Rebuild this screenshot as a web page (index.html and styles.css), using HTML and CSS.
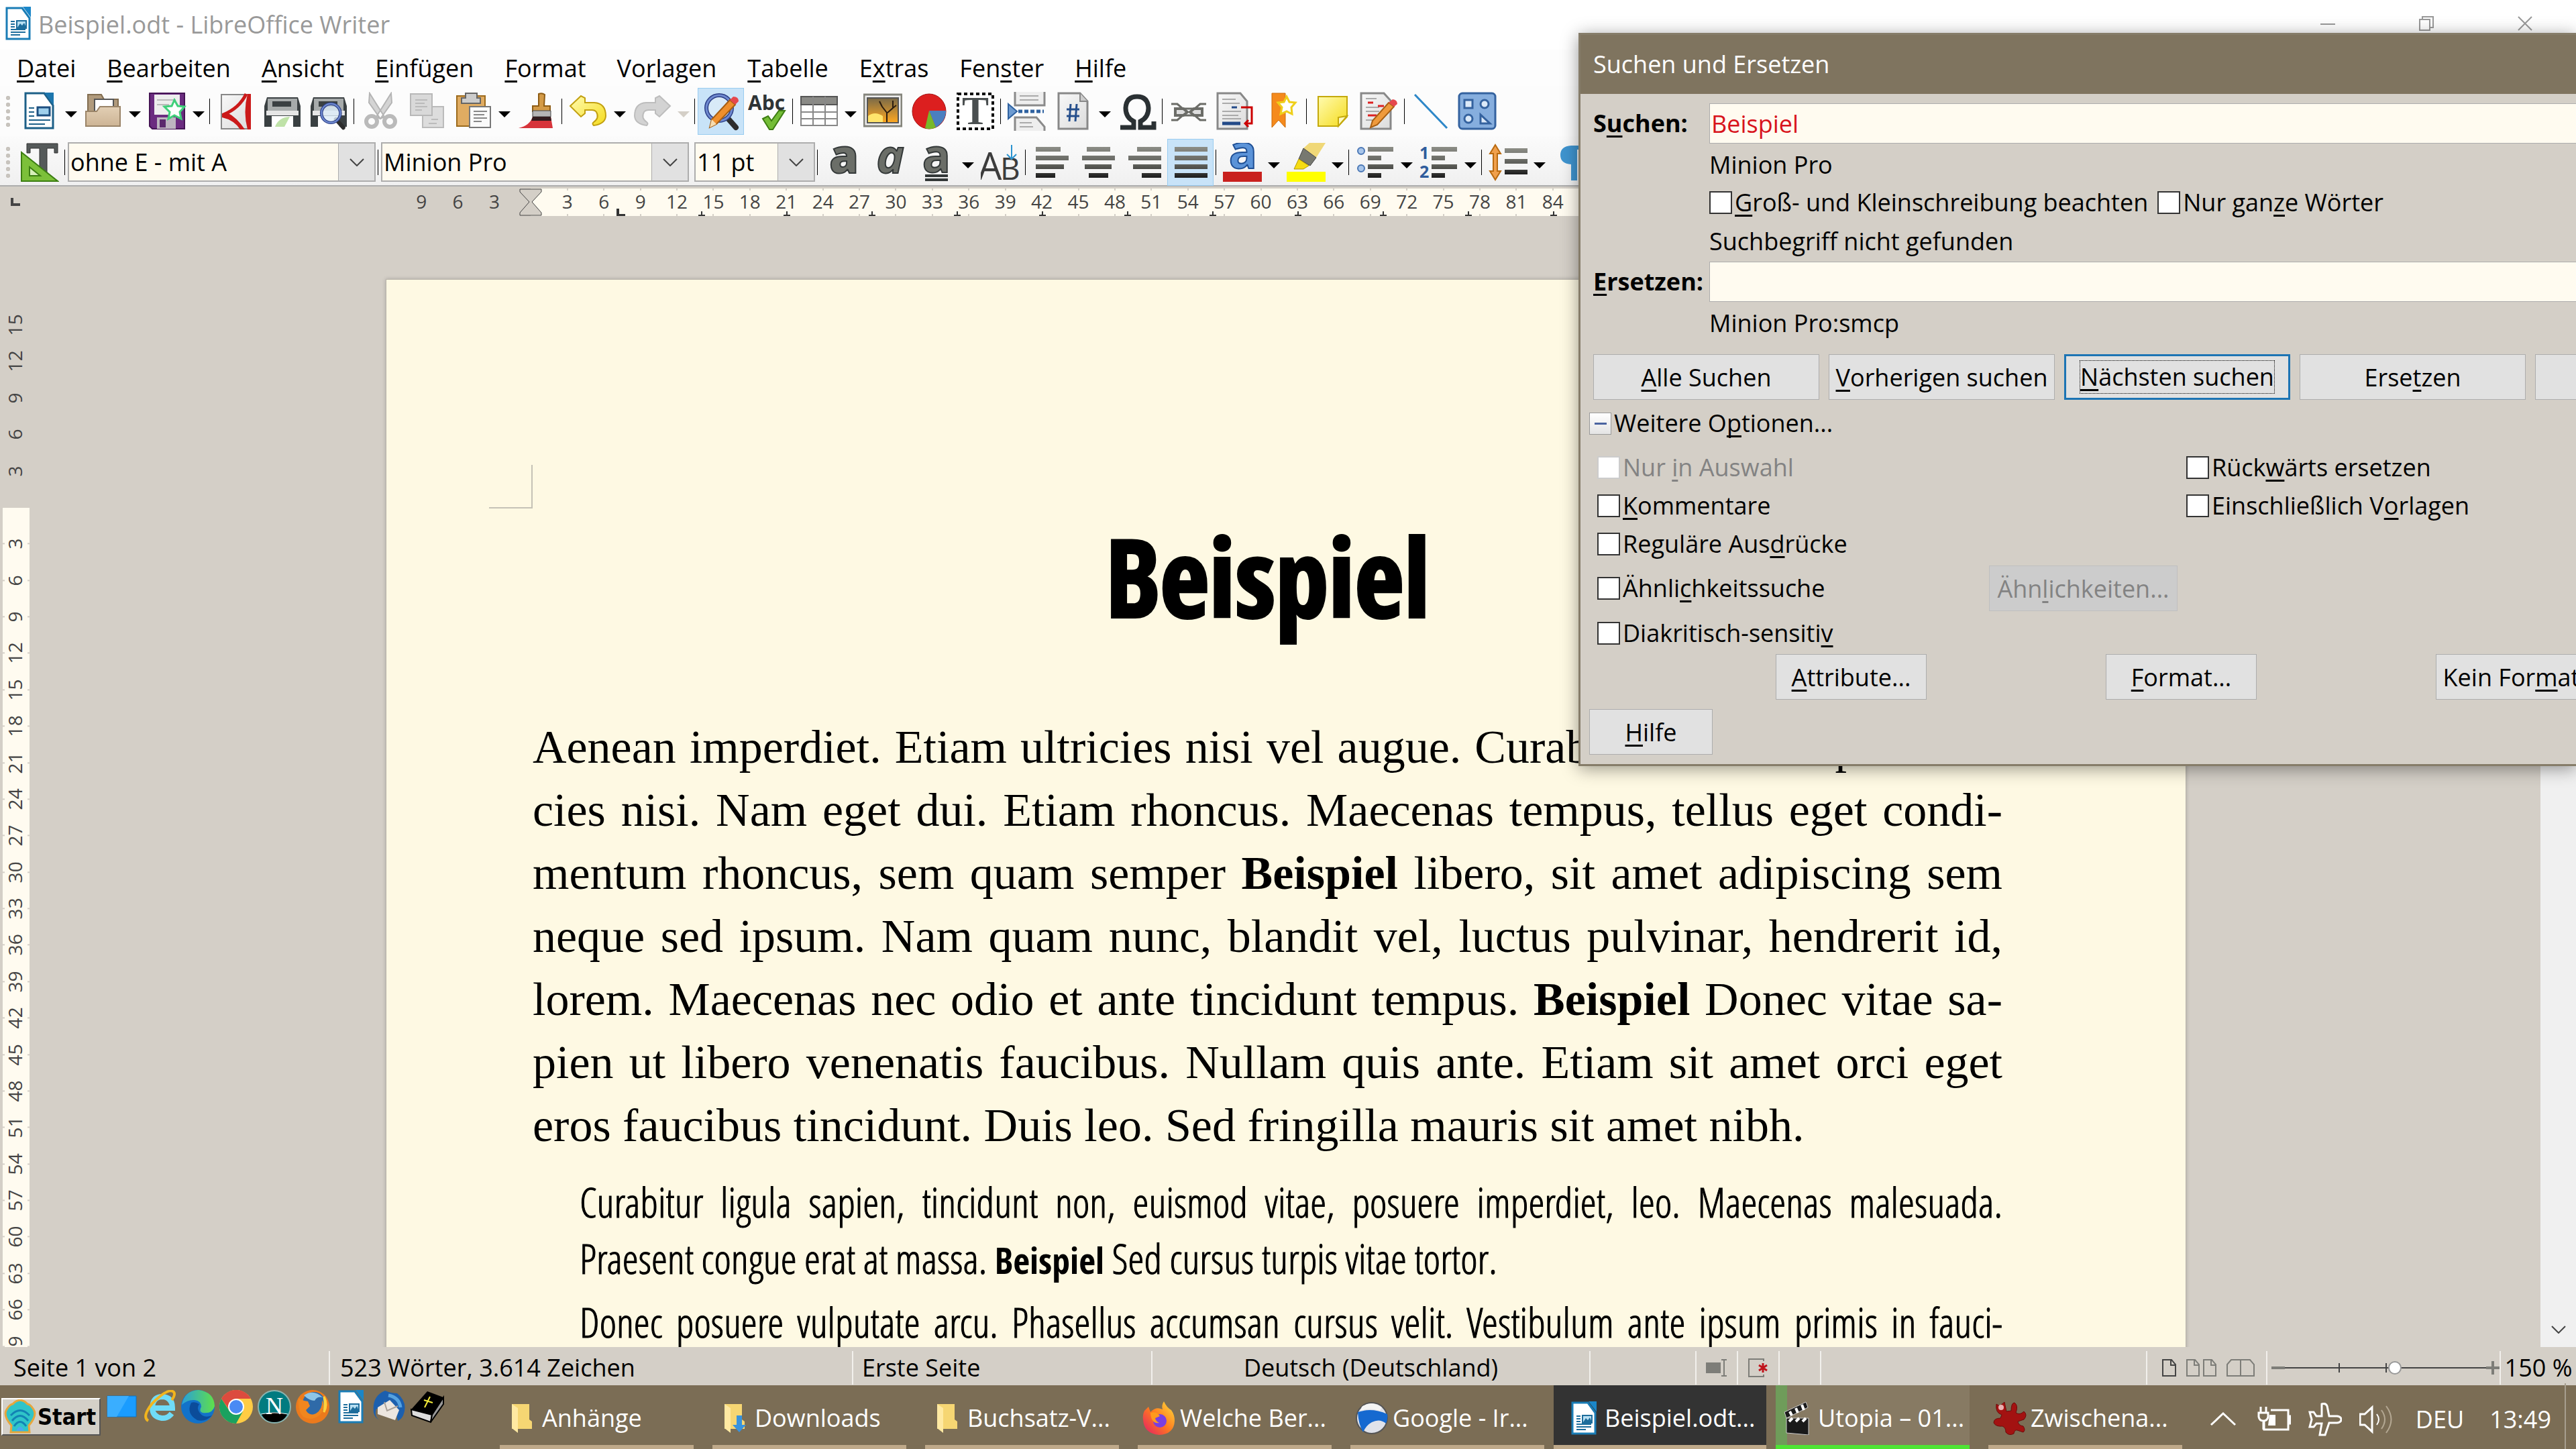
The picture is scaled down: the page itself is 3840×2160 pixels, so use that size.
FILE: index.html
```html
<!DOCTYPE html>
<html lang="de">
<head>
    <meta charset="UTF-8">
    <meta name="viewport" content="width=device-width, initial-scale=1.0">
    <title>Beispiel.odt - LibreOffice Writer</title>
    <link rel="stylesheet" href="styles.css">
</head>
<body>

<!-- Gemeinsame Symbole -->
<svg class="defs" aria-hidden="true">
    <defs>
        <linearGradient id="gPage" x1="0" y1="0" x2="1" y2="1"><stop offset="0" stop-color="#f8f8f8"/><stop offset="1" stop-color="#dcdcdc"/></linearGradient>
        <linearGradient id="gBar" x1="0" y1="0" x2="0" y2="1"><stop offset="0" stop-color="#8c8d86"/><stop offset="0.6" stop-color="#5c5d58"/><stop offset="1" stop-color="#1c1c1c"/></linearGradient>
        <linearGradient id="gFolder" x1="0" y1="0" x2="0" y2="1"><stop offset="0" stop-color="#e2cfb4"/><stop offset="1" stop-color="#cdb495"/></linearGradient>
        <linearGradient id="gSun" x1="0" y1="0" x2="0" y2="1"><stop offset="0" stop-color="#7a6a48"/><stop offset="1" stop-color="#ffa820"/></linearGradient>
        <linearGradient id="gYellow" x1="0" y1="0" x2="1" y2="1"><stop offset="0" stop-color="#fffbb0"/><stop offset="1" stop-color="#f5dc1e"/></linearGradient>
        <linearGradient id="gFire" x1="1" y1="0" x2="0" y2="1"><stop offset="0" stop-color="#ffe23c"/><stop offset="0.5" stop-color="#ff7a1f"/><stop offset="1" stop-color="#e3166c"/></linearGradient>
        <linearGradient id="gEdge" x1="0" y1="0" x2="1" y2="0"><stop offset="0" stop-color="#2a9fd8"/><stop offset="1" stop-color="#5fe04a"/></linearGradient>
    </defs>
    <symbol id="writer" viewBox="0 0 38 50">
        <path d="M2 2h23l11 15v31H2z" fill="#fff" stroke="#1a7db6" stroke-width="3"/>
        <path d="M26 0h12v16z" fill="#1a86c8"/>
        <path d="M8 22h6M8 26h6M8 30h6M8 34h22M8 38h22M8 42h14" stroke="#1d6d9c" stroke-width="2"/>
        <path d="M17 21h14v11H17z" fill="#b8dff2" stroke="#1d6d9c" stroke-width="2"/>
        <path d="M18 31l4-6 3 3 3-4 3 7z" fill="#1d6d9c"/>
    </symbol>
    <symbol id="folder" viewBox="0 0 36 44">
        <path d="M4 1h26v23l4 3v11H4z" fill="#f6d673"/>
        <path d="M4 1l9 6v37L4 37z" fill="#ffe9a2"/>
    </symbol>
    <symbol id="lens" viewBox="0 0 58 58">
        <path d="M36 36l15 17" stroke="#2d2d2d" stroke-width="8" stroke-linecap="round"/>
        <circle cx="26" cy="24" r="19" fill="#dcebf8" fill-opacity="0.8" stroke="#2c3f87" stroke-width="6"/>
        <circle cx="26" cy="24" r="19" fill="none" stroke="#6f8ad0" stroke-width="3"/>
    </symbol>
    <symbol id="chevron" viewBox="0 0 22 12"><path d="M1 1l10 10L21 1" fill="none" stroke="#444" stroke-width="2"/></symbol>
</svg>

<header class="titlebar">
    <svg class="title-icon"><use href="#writer"/></svg>
    <span class="title-text">Beispiel.odt - LibreOffice Writer</span>
    <div class="window-buttons">
        <button aria-label="Minimieren"><svg viewBox="0 0 22 22"><path d="M0 12h22" stroke="#999" stroke-width="2"/></svg></button>
        <button aria-label="Wiederherstellen"><svg viewBox="0 0 22 22"><path d="M1 5h15v16H1zM5 5V1h16v16h-5" fill="none" stroke="#999" stroke-width="2"/></svg></button>
        <button aria-label="Schließen"><svg viewBox="0 0 22 22"><path d="M1 1l20 20M21 1L1 21" stroke="#999" stroke-width="2"/></svg></button>
    </div>
</header>

<nav class="menubar">
    <button><u>D</u>atei</button>
    <button><u>B</u>earbeiten</button>
    <button><u>A</u>nsicht</button>
    <button><u>E</u>infügen</button>
    <button><u>F</u>ormat</button>
    <button>Vo<u>r</u>lagen</button>
    <button><u>T</u>abelle</button>
    <button>E<u>x</u>tras</button>
    <button>Fen<u>s</u>ter</button>
    <button><u>H</u>ilfe</button>
</nav>

<div class="toolbar">
    <span class="grip"></span>
    <button class="tool" aria-label="Neu"><svg viewBox="0 0 58 58"><path d="M8 2h28l13 18v34H8z" fill="#fff" stroke="#1d6088" stroke-width="3"/><path d="M36 1h14v19z" fill="#1d76ad"/><path d="M13 24h8M13 30h8M13 36h8M13 42h32M13 48h24" stroke="#1d6088" stroke-width="2"/><path d="M26 23h18v12H26z" fill="#9fd0ec" stroke="#1d4f80" stroke-width="3"/></svg></button>
    <button class="drop" aria-label="Neu Auswahl"></button>
    <button class="tool" aria-label="Öffnen"><svg viewBox="0 0 58 58"><path d="M6 4h20l4 7h21v18H6z" fill="#b09a7c" stroke="#826d50" stroke-width="2"/><path d="M16 11h28v20H16z" fill="#fff" stroke="#555" stroke-width="2"/><path d="M3 29h16l5-7h30v29H3z" fill="url(#gFolder)" stroke="#9a8468" stroke-width="2"/></svg></button>
    <button class="drop" aria-label="Öffnen Auswahl"></button>
    <button class="tool" aria-label="Speichern"><svg viewBox="0 0 58 58"><path d="M3 2h52v53H7l-4-4z" fill="#6b2c80" stroke="#451555" stroke-width="2"/><path d="M10 4h38v30H10z" fill="#eee"/><path d="M14 12h28M14 19h18" stroke="#bbb" stroke-width="2"/><path d="M14 38h28v17H14z" fill="#bdb5c0"/><path d="M18 41h9v12h-9z" fill="#5b2a6d"/><path d="M40 12l5 9 10 1-7 8 2 10-10-5-9 5 2-10-8-8 11-1z" fill="#fff" stroke="#3fd07a" stroke-width="3"/></svg></button>
    <button class="drop" aria-label="Speichern Auswahl"></button>
    <span class="sep"></span>
    <button class="tool" aria-label="Als PDF exportieren"><svg viewBox="0 0 58 58"><path d="M7 4h43v51H7z" fill="url(#gPage)" stroke="#888" stroke-width="2"/><path d="M44 3Q34 24 10 34" fill="none" stroke="#cb1a1a" stroke-width="5"/><path d="M8 32l8-1Q30 38 42 56h-7Q26 42 8 38z" fill="#cb1a1a"/><path d="M46 3h5v53h-5q-7-26 0-53z" fill="#cb1a1a"/></svg></button>
    <button class="tool" aria-label="Drucken"><svg viewBox="0 0 58 58"><path d="M6 8h46l4 13v31H2V21z" fill="#3a4042"/><path d="M7 10h44v18H7z" fill="#a7abab"/><path d="M14 14h28v8H14z" fill="#3a4042"/><path d="M5 28h48v7H5z" fill="#e6e6e6"/><path d="M13 36h32v16H13z" fill="#fff"/><path d="M18 52q5-14 22-15l-8 15z" fill="#bfe2a8"/></svg></button>
    <button class="tool" aria-label="Druckvorschau"><svg viewBox="0 0 58 58"><path d="M6 8h46l4 13v31H2V21z" fill="#3a4042"/><path d="M7 10h44v18H7z" fill="#a7abab"/><path d="M14 14h28v8H14z" fill="#3a4042"/><path d="M5 28h48v7H5z" fill="#e6e6e6"/><path d="M13 36h32v16H13z" fill="#fff"/><use href="#lens" x="13" y="13" width="43" height="45"/></svg></button>
    <span class="sep"></span>
    <button class="tool" aria-label="Ausschneiden"><svg viewBox="0 0 58 58"><path d="M13 2l22 35-6 3L12 16zM45 2L23 37l6 3 17-24z" fill="#d4d4d4" stroke="#b4b4b4" stroke-width="2"/><circle cx="16" cy="44" r="8" fill="none" stroke="#bababa" stroke-width="6"/><circle cx="43" cy="44" r="8" fill="none" stroke="#bababa" stroke-width="6"/></svg></button>
    <button class="tool" aria-label="Kopieren"><svg viewBox="0 0 58 58"><path d="M23 22h31v31H23z" fill="#ddd" stroke="#bbb" stroke-width="2"/><path d="M5 3h32v32H5z" fill="#d9d9d9" stroke="#b8b8b8" stroke-width="2"/><path d="M12 12h18M12 17h14M12 22h18M12 27h10M36 41h10M32 47h12" stroke="#bbb" stroke-width="2"/></svg></button>
    <button class="tool" aria-label="Einfügen"><svg viewBox="0 0 58 58"><path d="M5 6h42v45H5z" fill="#e0ac62" stroke="#9c6a1c" stroke-width="2"/><path d="M18 2h17v7h5v8H12V9h6z" fill="#ccc" stroke="#666" stroke-width="2"/><path d="M24 22h31v31H24z" fill="#fafafa" stroke="#777" stroke-width="2"/><path d="M30 29h20M30 34h16M30 39h20M30 44h12" stroke="#888" stroke-width="2"/></svg></button>
    <button class="drop" aria-label="Einfügen Auswahl"></button>
    <button class="tool" aria-label="Format übertragen"><svg viewBox="0 0 58 58"><path d="M32 3q5-2 9 1l-1 17h9v8H23v-8h9z" fill="#d39a47" stroke="#8e5c14" stroke-width="2"/><path d="M23 28h27v9H23z" fill="#b5b5b5" stroke="#444" stroke-width="1"/><path d="M23 37h27l3 17H2q17-4 21-17z" fill="#d7343b"/><path d="M23 37h27l1 6H21z" fill="#331c1e"/></svg></button>
    <span class="sep"></span>
    <button class="tool" aria-label="Rückgängig"><svg viewBox="0 0 58 58"><path d="M2 21L18 6l6 3v7h14q17 1 17 20-1 12-18 14-3-3 0-5 9-6 4-15-2-3-7-3H24v5l-6 5z" fill="url(#gYellow)" stroke="#c2a010" stroke-width="2"/></svg></button>
    <button class="drop" aria-label="Rückgängig Auswahl"></button>
    <button class="tool" aria-label="Wiederherstellen"><svg viewBox="0 0 58 58"><path d="M56 21L40 6l-6 3v7H20Q3 17 3 36q1 12 18 14 3-3 0-5-9-6-4-15 2-3 7-3h10v5l6 5z" fill="#d3d3d3" stroke="#bdbdbd" stroke-width="2"/></svg></button>
    <button class="drop off" disabled aria-label="Wiederherstellen Auswahl"></button>
    <span class="sep"></span>
    <button class="tool active" aria-label="Suchen und Ersetzen"><svg viewBox="0 0 58 58"><use href="#lens" width="58" height="58"/><path d="M12 53l3-12L42 12l8 7-28 29z" fill="#ef8f2c" stroke="#a75e12" stroke-width="2"/><path d="M42 12l5-5q8 0 8 7l-5 5z" fill="#e5484d"/><path d="M12 53l3-12 7 7z" fill="#f6dcb0"/></svg></button>
    <button class="tool" aria-label="Rechtschreibung"><svg viewBox="0 0 58 58"><text x="0" y="27" class="glyph-abc">Abc</text><path d="M22 40l8-4 5 7 11-15h9L37 56h-5z" fill="#74bd37" stroke="#3d7d12" stroke-width="2"/></svg></button>
    <span class="sep"></span>
    <button class="tool" aria-label="Tabelle"><svg viewBox="0 0 58 58"><path d="M2 7h54v43H2z" fill="#fff" stroke="#888" stroke-width="2"/><path d="M2 7h54v12H2z" fill="#8a8a86" stroke="#555" stroke-width="2"/><path d="M20 7v43M38 7v43M2 30h54M2 40h54" stroke="#888" stroke-width="2"/></svg></button>
    <button class="drop" aria-label="Tabelle Auswahl"></button>
    <button class="tool" aria-label="Bild"><svg viewBox="0 0 58 58"><path d="M1 4h56v47H1z" fill="#eee" stroke="#85857c" stroke-width="3"/><path d="M6 9h46v37H6z" fill="url(#gSun)" stroke="#555" stroke-width="2"/><path d="M7 45V36q10-8 22 0v9z" fill="#ffe46c"/><path d="M35 45V31l-7-9M36 31l8-7V13M44 24l5-4M28 22l-4-8" stroke="#2b1d10" stroke-width="2" fill="none"/></svg></button>
    <button class="tool" aria-label="Diagramm"><svg viewBox="0 0 58 58"><ellipse cx="29" cy="29" rx="25" ry="26" fill="#dc1f1f" stroke="#a51010" stroke-width="1"/><path d="M29 28h25q0 16-15 25z" fill="#4a7fc0"/><path d="M29 28l10 25q-8 4-16 1z" fill="#78b82a"/></svg></button>
    <button class="tool" aria-label="Textfeld"><svg viewBox="0 0 58 58"><path d="M3 3h52v52H3z" fill="#fff" stroke="#000" stroke-width="4" stroke-dasharray="5 4"/><text x="29" y="48" text-anchor="middle" class="glyph-t">T</text></svg></button>
    <span class="sep"></span>
    <button class="tool" aria-label="Seitenumbruch"><svg viewBox="0 0 58 58"><path d="M11 0v20h44V0M11 58V38h32l12 14v6" fill="#eee" stroke="#8a8a8a" stroke-width="3"/><path d="M18 6h28M18 12h28M18 46h18M18 52h20" stroke="#aaa" stroke-width="2"/><path d="M1 18l13 11L1 40z" fill="#6d9bd1" stroke="#2f62a0" stroke-width="2"/><path d="M16 29h38" stroke="#2f62a0" stroke-width="5" stroke-dasharray="6 3"/></svg></button>
    <button class="tool" aria-label="Feldbefehl"><svg viewBox="0 0 58 58"><path d="M7 2h32l11 12v41H7z" fill="url(#gPage)" stroke="#888" stroke-width="3"/><path d="M39 2v12h11" fill="#ccc" stroke="#888" stroke-width="2"/><path d="M25 18l-2 26M34 18l-2 26M19 26h19M19 36h19" stroke="#264f8c" stroke-width="3"/></svg></button>
    <button class="drop" aria-label="Feldbefehl Auswahl"></button>
    <button class="tool" aria-label="Sonderzeichen"><svg viewBox="0 0 58 58"><path d="M4 53h20v-9Q12 38 12 24 13 7 29 7t17 17q0 14-12 20v9h20v-9" fill="none" stroke="#2a3033" stroke-width="7"/></svg></button>
    <span class="sep"></span>
    <button class="tool" aria-label="Hyperlink"><svg viewBox="0 0 58 58"><path d="M3 18h9l8 7h18l8-7h9M3 42h9l8-7h18l8 7h9" fill="none" stroke="#6b6c67" stroke-width="3"/><path d="M9 25h12l6 5-6 5H9zM49 25H37l-6 5 6 5h12z" fill="#ddd" stroke="#6b6c67" stroke-width="4"/></svg></button>
    <button class="tool" aria-label="Fußnote"><svg viewBox="0 0 58 58"><path d="M3 2h34l10 12v41H3z" fill="url(#gPage)" stroke="#888" stroke-width="3"/><path d="M10 11h20M10 17h26M10 29h28M10 35h24M10 40h28" stroke="#aaa" stroke-width="2"/><path d="M10 47h27" stroke="#234a88" stroke-width="5"/><path d="M24 23h8" stroke="#234a88" stroke-width="3"/><path d="M38 23h16v24H44m5-5l-5 5 5 5" fill="none" stroke="#c00" stroke-width="3"/></svg></button>
    <button class="tool" aria-label="Lesezeichen"><svg viewBox="0 0 58 58"><path d="M15 2h20v51l-10-11-10 11z" fill="#f58a1c" stroke="#cc6a08" stroke-width="1"/><path d="M37 7l4 8 9 1-6 7 1 10-8-4-9 4 2-10-6-7 9-1z" fill="#fff" stroke="#efcf1a" stroke-width="3"/></svg></button>
    <span class="sep"></span>
    <button class="tool" aria-label="Kommentar"><svg viewBox="0 0 58 58"><path d="M7 7h43v30L37 51H7z" fill="url(#gYellow)" stroke="#c4a90c" stroke-width="2"/><path d="M50 36L37 51V38z" fill="#fffac0" stroke="#c4a90c" stroke-width="2"/></svg></button>
    <button class="tool" aria-label="Änderungen"><svg viewBox="0 0 58 58"><path d="M2 2h34l10 11v42H2z" fill="url(#gPage)" stroke="#888" stroke-width="3"/><path d="M9 10h16M9 23h20M9 29h20M9 42h16" stroke="#aaa" stroke-width="2"/><path d="M12 16h8M27 21h9M12 35h13" stroke="#d22" stroke-width="3"/><path d="M16 53l3-10 24-27 8 6-25 27z" fill="#ef9a3c" stroke="#a75e12" stroke-width="2"/><path d="M43 16l6-5q7 1 7 7l-5 4z" fill="#e5484d"/></svg></button>
    <span class="sep"></span>
    <button class="tool" aria-label="Linie"><svg viewBox="0 0 58 58"><path d="M5 4l48 50" stroke="#2d87c8" stroke-width="3"/></svg></button>
    <button class="tool" aria-label="Formen"><svg viewBox="0 0 58 58"><rect x="2" y="2" width="54" height="53" rx="5" fill="#86aede" stroke="#34629f" stroke-width="3"/><path d="M10 12h12v12H10zM34 34v13h14z" fill="#dbe9f8" stroke="#34629f" stroke-width="3"/><circle cx="40" cy="18" r="6" fill="#dbe9f8" stroke="#34629f" stroke-width="3"/><circle cx="16" cy="40" r="6" fill="#dbe9f8" stroke="#34629f" stroke-width="3"/></svg></button>
</div>

<div class="toolbar format">
    <span class="grip"></span>
    <button class="tool" aria-label="Formatvorlagen"><svg viewBox="0 0 58 58"><path d="M10 1h46v14h-5V8H40v42H29V8H15v7h-5z" fill="#555a5a" stroke="#333" stroke-width="1"/><path d="M2 14l54 43H2z" fill="#7cc03a" stroke="#3c7e12" stroke-width="2"/><path d="M14 36l16 13H14z" fill="#d6efb8" stroke="#3c7e12" stroke-width="2"/></svg></button>
    <span class="sep"></span>
    <div class="combo style-combo"><select aria-label="Absatzvorlage"><option>ohne E - mit A</option></select><span><svg><use href="#chevron"/></svg></span></div>
    <span class="sep"></span>
    <div class="combo font-combo"><select aria-label="Schriftart"><option>Minion Pro</option></select><span><svg><use href="#chevron"/></svg></span></div>
    <span class="sep blank"></span>
    <div class="combo size-combo"><select aria-label="Schriftgröße"><option>11 pt</option></select><span><svg><use href="#chevron"/></svg></span></div>
    <span class="sep"></span>
    <button class="tool" aria-label="Fett"><svg viewBox="0 0 58 58"><text x="29" y="45" text-anchor="middle" class="glyph-a bold">a</text></svg></button>
    <button class="tool" aria-label="Kursiv"><svg viewBox="0 0 58 58"><text x="29" y="45" text-anchor="middle" class="glyph-a italic">a</text></svg></button>
    <button class="tool" aria-label="Unterstrichen"><svg viewBox="0 0 58 58"><text x="29" y="44" text-anchor="middle" class="glyph-a">a</text><path d="M12 49h34M12 55h34" stroke="#333838" stroke-width="4"/></svg></button>
    <button class="drop" aria-label="Unterstrichen Auswahl"></button>
    <button class="tool" aria-label="Kapitälchen"><svg viewBox="0 0 58 58"><text x="-4" y="55" class="glyph-ab">A</text><text x="29" y="55" class="glyph-ab small">B</text><path d="M46 3v20M39 17l7 7 7-7" fill="none" stroke="#2a93d0" stroke-width="2"/></svg></button>
    <span class="sep"></span>
    <button class="tool" aria-label="Linksbündig"><svg viewBox="0 0 58 58"><path d="M5 6h37v7H5zM5 19h49v7H5zM5 32h42v7H5zM5 45h29v7H5z" fill="url(#gBar)"/></svg></button>
    <button class="tool" aria-label="Zentriert"><svg viewBox="0 0 58 58"><path d="M12 6h35v7H12zM5 19h49v7H5zM9 32h40v7H9zM15 45h29v7H15z" fill="url(#gBar)"/></svg></button>
    <button class="tool" aria-label="Rechtsbündig"><svg viewBox="0 0 58 58"><path d="M18 6h36v7H18zM5 19h49v7H5zM12 32h42v7H12zM25 45h29v7H25z" fill="url(#gBar)"/></svg></button>
    <button class="tool active" aria-label="Blocksatz"><svg viewBox="0 0 58 58"><path d="M5 6h49v7H5zM5 19h49v7H5zM5 32h49v7H5zM5 45h49v7H5z" fill="url(#gBar)"/></svg></button>
    <span class="sep"></span>
    <button class="tool" aria-label="Schriftfarbe"><svg viewBox="0 0 58 58"><text x="30" y="38" text-anchor="middle" class="glyph-a blue">a</text><path d="M0 43h58v15H0z" fill="#c9211e"/></svg></button>
    <button class="drop" aria-label="Schriftfarbe Auswahl"></button>
    <button class="tool" aria-label="Hervorhebung"><svg viewBox="0 0 58 58"><path d="M34 0h24L44 22 25 8z" fill="#f0d878"/><path d="M25 8l19 14-9 12-17-10z" fill="#777870" stroke="#444" stroke-width="1"/><path d="M18 24l15 10-8 5H11z" fill="#f6dc14" stroke="#b39a00" stroke-width="1"/><path d="M0 43h58v15H0z" fill="#ff0"/></svg></button>
    <button class="drop" aria-label="Hervorhebung Auswahl"></button>
    <span class="sep"></span>
    <button class="tool" aria-label="Aufzählung"><svg viewBox="0 0 58 58"><circle cx="8" cy="12" r="5" fill="#a9c6ea" stroke="#4a77b5" stroke-width="2"/><circle cx="8" cy="38" r="5" fill="#a9c6ea" stroke="#4a77b5" stroke-width="2"/><path d="M18 6h38v7H18zM18 19h20v7H18zM18 32h38v7H18zM18 45h20v7H18z" fill="url(#gBar)"/></svg></button>
    <button class="drop" aria-label="Aufzählung Auswahl"></button>
    <button class="tool" aria-label="Nummerierung"><svg viewBox="0 0 58 58"><text x="0" y="24" class="glyph-num">1</text><text x="0" y="52" class="glyph-num">2</text><path d="M18 6h38v7H18zM18 19h20v7H18zM18 32h38v7H18zM18 45h20v7H18z" fill="url(#gBar)"/></svg></button>
    <button class="drop" aria-label="Nummerierung Auswahl"></button>
    <span class="sep"></span>
    <button class="tool" aria-label="Zeilenabstand"><svg viewBox="0 0 58 58"><path d="M10 3l8 13h-5v26h5l-8 13-8-13h5V16H2z" fill="#f0a04c" stroke="#b96a10" stroke-width="2"/><path d="M24 8h34v7H24zM24 24h34v7H24zM24 40h34v7H24z" fill="url(#gBar)"/></svg></button>
    <button class="drop" aria-label="Zeilenabstand Auswahl"></button>
    <span class="sep blank"></span>
    <button class="tool" aria-label="Formatierungszeichen"><svg viewBox="0 0 58 58"><path d="M50 4H20Q4 5 4 18t16 14v24h9V10h7v46h9V10h5z" fill="#3f94cf"/></svg></button>
</div>

<div class="ruler">
    <svg class="tab-kind" viewBox="0 0 14 12"><path d="M2 0v10h12" fill="none" stroke="#444" stroke-width="4"/></svg>
    <div class="ruler-body">
        <div class="ruler-numbers">
            <span>9</span><span>6</span><span>3</span><span></span>
            <span>3</span><span>6</span><span>9</span><span>12</span><span>15</span><span>18</span><span>21</span><span>24</span><span>27</span><span>30</span><span>33</span><span>36</span><span>39</span><span>42</span><span>45</span><span>48</span><span>51</span><span>54</span><span>57</span><span>60</span><span>63</span><span>66</span><span>69</span><span>72</span><span>75</span><span>78</span><span>81</span><span>84</span>
        </div>
        <svg class="ruler-marks" viewBox="0 0 1800 41">
            <path d="M174 1h32v4l-14 15 14 16v4h-32v-4l14-16-14-15z" fill="#d4cfc7" stroke="#444" stroke-width="1"/>
            <path d="M320 30v10h11" fill="none" stroke="#333" stroke-width="4"/>
            <path d="M445 34v6m-5 0h10M572 34v6m-5 0h10M699 34v6m-5 0h10M826 34v6m-5 0h10M953 34v6m-5 0h10M1080 34v6m-5 0h10M1207 34v6m-5 0h10M1334 34v6m-5 0h10M1461 34v6m-5 0h10M1588 34v6m-5 0h10M1715 34v6m-5 0h10" stroke="#333" stroke-width="2"/>
        </svg>
    </div>
</div>

<main class="workspace">
    <div class="vruler">
        <div class="vruler-numbers">
            <span>15</span><span>12</span><span>9</span><span>6</span><span>3</span><span></span>
            <span>3</span><span>6</span><span>9</span><span>12</span><span>15</span><span>18</span><span>21</span><span>24</span><span>27</span><span>30</span><span>33</span><span>36</span><span>39</span><span>42</span><span>45</span><span>48</span><span>51</span><span>54</span><span>57</span><span>60</span><span>63</span><span>66</span><span>69</span>
        </div>
    </div>
    <article class="page">
        <div class="crop-mark"></div>
        <h1>Beispiel</h1>
        <p class="lead">
            <span>Aenean imperdiet. Etiam ultricies nisi vel augue. Curabitur ullamcorper ultri-</span>
            <span>cies nisi. Nam eget dui. Etiam rhoncus. Maecenas tempus, tellus eget condi-</span>
            <span>mentum rhoncus, sem quam semper <b>Beispiel</b> libero, sit amet adipiscing sem</span>
            <span>neque sed ipsum. Nam quam nunc, blandit vel, luctus pulvinar, hendrerit id,</span>
            <span>lorem. Maecenas nec odio et ante tincidunt tempus. <b>Beispiel</b> Donec vitae sa-</span>
            <span>pien ut libero venenatis faucibus. Nullam quis ante. Etiam sit amet orci eget</span>
            <span class="last">eros faucibus tincidunt. Duis leo. Sed fringilla mauris sit amet nibh.</span>
        </p>
        <p class="note">
            <span>Curabitur ligula sapien, tincidunt non, euismod vitae, posuere imperdiet, leo. Maecenas malesuada.</span>
            <span class="last">Praesent congue erat at massa. <b>Beispiel</b> Sed cursus turpis vitae tortor.</span>
        </p>
        <p class="note">
            <span>Donec posuere vulputate arcu. Phasellus accumsan cursus velit. Vestibulum ante ipsum primis in fauci-</span>
        </p>
    </article>
    <div class="scrollbar"><svg><use href="#chevron"/></svg></div>
</main>

<footer class="statusbar">
    <span class="st-page">Seite 1 von 2</span>
    <span class="st-words">523 Wörter, 3.614 Zeichen</span>
    <span class="st-style">Erste Seite</span>
    <span class="st-lang">Deutsch (Deutschland)</span>
    <span class="st-empty"></span>
    <span class="st-cell"><svg viewBox="0 0 34 28"><path d="M1 6h22v16H1z" fill="#7d7d78"/><path d="M24 2h8M28 2v24M24 26h8" stroke="#7d7d78" stroke-width="2"/></svg></span>
    <span class="st-cell"><svg viewBox="0 0 34 28"><path d="M25 4V1H3v26h22v-3" fill="none" stroke="#7d7d78" stroke-width="2"/><path d="M24 7v14M18 10l12 8M30 10l-12 8" stroke="#c0141c" stroke-width="3"/></svg></span>
    <span class="st-cell"></span>
    <span class="st-gap"></span>
    <span class="st-views"><svg viewBox="0 0 140 26"><path d="M1 1h13l6 7v17H1zM13 1v8h7" fill="none" stroke="#444" stroke-width="2"/><path d="M37 1h12l6 7v17H37zM48 1v8h7M62 1h12l6 7v17H62zM73 1v8h7M97 8l6-7h14v24H97zM117 1h14l6 7v17h-20z" fill="none" stroke="#7d7d78" stroke-width="2"/></svg></span>
    <span class="st-zoom"><button aria-label="Verkleinern"><svg viewBox="0 0 20 20"><path d="M0 10h20" stroke="#7d7d78" stroke-width="4"/></svg></button><input type="range" min="0" max="100" value="55" aria-label="Maßstab"><button aria-label="Vergrößern"><svg viewBox="0 0 20 20"><path d="M0 10h20M10 0v20" stroke="#7d7d78" stroke-width="4"/></svg></button></span>
    <span class="st-percent">150 %</span>
</footer>

<footer class="taskbar">
    <button class="start"><svg viewBox="0 0 48 52"><path d="M10 49l1-10Q-2 24 4 15q5-8 9-8 4-5 11-6 7 1 11 6 4 0 9 8 6 9-7 24l1 10z" fill="#2fc4c8" stroke="#e6a63c" stroke-width="3"/><path d="M12 32q12-15 24 0M15 40q9-13 18 0M10 24q14-15 28 0" fill="none" stroke="#1282b4" stroke-width="3"/><path d="M18 47q6-13 12 0z" fill="#49a8f0"/></svg>Start</button>
    <div class="quick">
        <button aria-label="Desktop"><svg viewBox="0 0 50 50"><path d="M4 9h43v31H4z" fill="#1a9cff" stroke="#1173bd" stroke-width="1"/><path d="M4 9h32L18 40H4z" fill="#3aaeff"/></svg></button>
        <button aria-label="Internet Explorer"><svg viewBox="0 0 50 50"><path d="M43 35Q37 43 28 42 14 40 14 26 15 10 29 10q15 1 15 17H16" fill="none" stroke="#6fdcf8" stroke-width="8"/><path d="M8 46Q-2 40 14 20 38-4 46 3q3 4-3 12" fill="none" stroke="#f2b51e" stroke-width="4"/></svg></button>
        <button aria-label="Edge"><svg viewBox="0 0 50 50"><circle cx="25" cy="25" r="25" fill="#1272c9"/><path d="M1 22Q5 1 26 0q23 3 24 24-3 12-18 10-6-2-2-9 0-9-10-10T1 22z" fill="url(#gEdge)"/><path d="M15 19q-8 16 9 26 13 3 22-7-13 5-19-5-4-6 0-12-6-4-12-2z" fill="#0b4c9a"/></svg></button>
        <button aria-label="Chrome"><svg viewBox="0 0 50 50"><circle cx="25" cy="25" r="25" fill="#fc4"/><path d="M3 13a25 25 0 0 1 44 0H25L15 30z" fill="#dc4b3e"/><path d="M3 13a25 25 0 0 0 22 37l10-18-20-1z" fill="#1aa15f"/><circle cx="25" cy="25" r="11" fill="#4a8af4" stroke="#fff" stroke-width="2"/></svg></button>
        <button aria-label="Netscape"><svg viewBox="0 0 50 50"><circle cx="25" cy="25" r="24" fill="#007b80" stroke="#8ab4b0" stroke-width="2"/><path d="M6 36q19-5 38 0-5 12-19 12T6 36z" fill="#000"/><path d="M5 36q20-4 40 0" stroke="#fff" stroke-width="1" fill="none"/><text x="25" y="36" text-anchor="middle" class="glyph-n">N</text></svg></button>
        <button aria-label="Firefox"><svg viewBox="0 0 50 50"><circle cx="25" cy="25" r="25" fill="#ec7a1c"/><circle cx="27" cy="20" r="17" fill="#2f6aa8"/><path d="M12 8q14-10 28 3-8-2-12 5-8 0-16-8z" fill="#8ec5e6"/><path d="M4 12q5 4 14 5l3 7-6 6q5 10 15 5 10-6 9-20 6 12-3 22-12 10-25 3Q2 30 4 12z" fill="#f0861e"/><path d="M42 10q6 12 0 23 2-12 0-23z" fill="#ffd23c" stroke="#ffd23c" stroke-width="3"/></svg></button>
        <button aria-label="LibreOffice Writer"><svg viewBox="0 0 38 50"><use href="#writer"/></svg></button>
        <button aria-label="Thunderbird"><svg viewBox="0 0 50 50"><path d="M2 34Q-1 9 19 1q9 4 18 4 17 14 9 33-3 6-8 8l-4-16L6 28q-4 12 5 17-7-3-9-11z" fill="#1c5fae"/><path d="M8 26l18-11 14 15-6 15L8 36z" fill="#ece6e0"/><path d="M18 18l4 13 16-7" fill="none" stroke="#a9a098" stroke-width="2"/><path d="M24 8q16 3 18 18" stroke="#56a2e0" stroke-width="5" fill="none"/></svg></button>
        <button aria-label="Bibel"><svg viewBox="0 0 50 50"><path d="M25 2l24 9-17 26-31-8z" fill="#000"/><path d="M1 29l31 8-2 11L2 38z" fill="#ddd" stroke="#000" stroke-width="2"/><path d="M32 37l17-26v10L30 48z" fill="#999" stroke="#000" stroke-width="2"/><path d="M29 10l-8 16M20 15l13 4" stroke="#f4ec3a" stroke-width="2"/></svg></button>
    </div>
    <nav class="tasks">
        <button class="task narrow"><svg><use href="#folder"/></svg><span>Anhänge</span></button>
        <button class="task narrow"><svg viewBox="0 0 36 44"><use href="#folder"/><path d="M22 18h8v14h6L26 43 16 32h6z" fill="#3893dd"/></svg><span>Downloads</span></button>
        <button class="task narrow"><svg><use href="#folder"/></svg><span>Buchsatz-V...</span></button>
        <button class="task"><svg viewBox="0 0 50 50"><path d="M3 14l6-6 3 8q8-9 18-4-2-6 2-12 4 9 11 13 5 7 5 16Q47 49 25 50 2 48 1 27q-1-7 2-13z" fill="url(#gFire)"/><circle cx="26" cy="29" r="10" fill="#7a3fe0"/><path d="M12 17q9-3 14 5l-7 3q1 5 6 7-12 2-13-15z" fill="#ff9a1c"/></svg><span>Welche Ber...</span></button>
        <button class="task"><svg viewBox="0 0 50 50"><circle cx="25" cy="25" r="23" fill="#dfe2ea" stroke="#555" stroke-width="2"/><path d="M4 16q21-7 44 3 1 8-2 14-9-8-21-2-9 5-13 15Q5 34 4 16z" fill="#1569d0"/><path d="M10 8q14-10 30 1l-3 5q-14-5-29 0z" fill="#f5f5f5"/></svg><span>Google - Ir...</span></button>
        <button class="task current"><svg viewBox="0 0 38 50"><use href="#writer"/></svg><span>Beispiel.odt...</span></button>
        <button class="task media"><svg viewBox="0 0 40 50"><path d="M1 16L33 1l3 8L4 25zM4 25h33v25l-33-3z" fill="#1a1a1a" stroke="#ccc" stroke-width="1"/><path d="M9 15l3 6M18 10l3 7M27 5l3 8M8 30l5-5M18 30l5-5M28 30l5-5" stroke="#fff" stroke-width="4"/></svg><span>Utopia – 01...</span></button>
        <button class="task"><svg viewBox="0 0 50 50"><path d="M5 4l5 3 7-6 3 14 7-1q0-12 5-12 6 4 2 15 6 4 12-2 6 5 0 12l-9 3q1 6 8 7 4 6 0 9l-9-3q-4-1-5 5-7 4-12-2 0-7-5-9-10 1-13-5 0-7 10-7l2-5q-10-3-8-16z" fill="#a31211" stroke="#6d0b0b" stroke-width="1"/><circle cx="12" cy="9" r="4" fill="#e9b0b0"/></svg><span>Zwischena...</span></button>
    </nav>
    <div class="tray">
        <svg class="tray-icon" viewBox="0 0 50 50"><path d="M7 33l18-17 18 17" fill="none" stroke="#fff" stroke-width="3"/></svg>
        <svg class="tray-icon" viewBox="0 0 50 50"><path d="M20 11h26v29H10V28M46 20h3v11h-3" fill="none" stroke="#fff" stroke-width="3"/><path d="M18 18h9v16H16z" fill="#fff"/><path d="M5 6v9M13 6v9M2 15h14v6q-1 6-7 6t-7-6zM9 27v13" fill="none" stroke="#fff" stroke-width="3"/></svg>
        <svg class="tray-icon" viewBox="0 0 50 50"><path d="M20 2q6-2 8 3l3 15h12q6 1 6 5t-6 5H31l-6 18h-8l3-17h-8l-4 5H2l3-11-3-11h6l4 6h8z" fill="none" stroke="#fff" stroke-width="3"/></svg>
        <svg class="tray-icon" viewBox="0 0 50 50"><path d="M1 17h7L19 7v36L8 33H1z" fill="none" stroke="#fff" stroke-width="3"/><path d="M26 17q6 8 0 16" fill="none" stroke="#fff" stroke-width="2"/><path d="M33 11q10 14 0 28M40 5q15 20 0 40" fill="none" stroke="#b4a893" stroke-width="2"/></svg>
        <span class="lang">DEU</span>
        <time>13:49</time>
    </div>
</footer>

<!-- Dialog Suchen und Ersetzen -->
<section class="dialog" role="dialog" aria-labelledby="dialogTitle">
    <h2 id="dialogTitle">Suchen und Ersetzen</h2>
    <form class="dialog-body">
        <div class="search-grid">
            <label for="searchInput">S<u>u</u>chen:</label>
            <input type="text" id="searchInput" class="field" value="Beispiel">
            <div class="second info">Minion Pro</div>
            <div class="second checks">
                <label class="check"><input type="checkbox"><span><u>G</u>roß- und Kleinschreibung beachten</span></label>
                <label class="check"><input type="checkbox"><span>Nur gan<u>z</u>e Wörter</span></label>
            </div>
            <div class="second info result">Suchbegriff nicht gefunden</div>
            <label for="replaceInput"><u>E</u>rsetzen:</label>
            <input type="text" id="replaceInput" class="field">
            <div class="second info">Minion Pro:smcp</div>
        </div>
        <div class="actions">
            <button type="button"><u>A</u>lle Suchen</button>
            <button type="button"><u>V</u>orherigen suchen</button>
            <button type="button" class="default"><span><u>N</u>ächsten suchen</span></button>
            <button type="button">Erse<u>t</u>zen</button>
            <button type="button" aria-label="Alle ersetzen"></button>
        </div>
        <button type="button" class="expander"><span class="minus"></span><span>Weitere O<u>p</u>tionen...</span></button>
        <div class="options">
            <label class="check off"><input type="checkbox" disabled><span>Nur <u>i</u>n Auswahl</span></label>
            <label class="check right"><input type="checkbox"><span>Rück<u>w</u>ärts ersetzen</span></label>
            <label class="check"><input type="checkbox"><span><u>K</u>ommentare</span></label>
            <label class="check right"><input type="checkbox"><span>Einschließlich V<u>o</u>rlagen</span></label>
            <label class="check"><input type="checkbox"><span>Reguläre Aus<u>d</u>rücke</span></label>
            <label class="check tall"><input type="checkbox"><span>Ähnli<u>c</u>hkeitssuche</span></label>
            <button type="button" class="similar" disabled>Ähn<u>l</u>ichkeiten...</button>
            <label class="check"><input type="checkbox"><span>Diakritisch-sensiti<u>v</u></span></label>
        </div>
        <div class="formats">
            <button type="button"><u>A</u>ttribute...</button>
            <button type="button"><u>F</u>ormat...</button>
            <button type="button">Kein For<u>m</u>at</button>
        </div>
        <button type="button" class="help"><u>H</u>ilfe</button>
    </form>
</section>

</body>
</html>
```

FILE: styles.css
```css
* {
    box-sizing: border-box;
}
body {
    margin: 0;
    height: 100vh;
    display: flex;
    flex-direction: column;
    overflow: hidden;
    position: relative;
    background: #d4cfc7;
    color: #000;
    font-family: "Open Sans", "Noto Sans", sans-serif;
    font-size: 36px;
    line-height: 48px;
}
button, input, select {
    font: inherit;
    color: inherit;
}
button {
    border: none;
    background: none;
    padding: 0;
    white-space: nowrap;
}
svg {
    display: block;
    flex: none;
}
u {
    text-decoration-thickness: 3px;
    text-underline-offset: 5px;
    text-decoration-skip-ink: none;
}
.defs {
    position: absolute;
    width: 0;
    height: 0;
}

/* Titelleiste und Menü */
.titlebar {
    display: flex;
    align-items: center;
    flex: none;
    height: 74px;
    padding: 0 3px 4px 8px;
    background: #fff;
    color: #999;
}
.title-icon {
    width: 38px;
    height: 50px;
    margin-right: 11px;
}
.title-text {
    flex: 1;
    padding-top: 4px;
}
.window-buttons {
    display: flex;
}
.window-buttons button {
    width: 147px;
    display: flex;
    justify-content: center;
}
.window-buttons svg {
    width: 22px;
    height: 22px;
}
.menubar {
    display: flex;
    flex: none;
    height: 54px;
    gap: 46px;
    padding: 2px 25px 0;
    background: #fdfdfd;
}

/* Symbolleisten */
.toolbar {
    display: flex;
    align-items: center;
    flex: none;
    height: 75px;
    padding-left: 9px;
    background: #fcfcfc;
}
.toolbar.format {
    padding-top: 4px;
    border-bottom: 2px solid #adadad;
    background: linear-gradient(#fbfbfb, #f0f0f0);
}
.grip {
    width: 6px;
    height: 50px;
    flex: none;
    margin-right: 9px;
    background: radial-gradient(circle, #c8c4be 3px, transparent 3px) 0 0 / 6px 10px;
}
.tool {
    width: 69px;
    height: 70px;
    flex: none;
    display: flex;
    align-items: center;
    justify-content: center;
}
.tool svg {
    width: 58px;
    height: 58px;
}
.tool.active {
    background: #c8e3f8;
    border: 1px solid #99ccf0;
}
.drop {
    width: 26px;
    height: 70px;
    flex: none;
    display: flex;
    align-items: center;
    justify-content: center;
}
.drop::before {
    content: "";
    margin-top: 10px;
    border: 9px solid transparent;
    border-top-color: #000;
    border-bottom: none;
}
.drop.off::before {
    border-top-color: #d4cfc7;
}
.sep {
    width: 1px;
    height: 38px;
    flex: none;
    margin: 0 4px 0 3px;
    background: #000;
}
.sep.blank {
    background: none;
}
.combo {
    display: flex;
    flex: none;
    height: 59px;
    border: 2px solid #adadad;
    background: #fffbf0;
}
.combo select {
    flex: 1;
    min-width: 0;
    appearance: none;
    border: none;
    padding: 0 2px;
    background: none;
}
.combo span {
    width: 54px;
    display: flex;
    align-items: center;
    justify-content: center;
    border-left: 1px solid #adadad;
    background: #e1e1e1;
}
.combo svg, .scrollbar svg {
    width: 22px;
    height: 12px;
}
.style-combo, .font-combo {
    width: 459px;
}
.size-combo {
    width: 180px;
}
.glyph-abc {
    font: bold 30px "Open Sans", sans-serif;
    fill: #2e3436;
}
.glyph-t {
    font: bold 60px "Liberation Serif", serif;
    fill: #4a4f50;
}
.glyph-a {
    font: bold 70px "Open Sans", sans-serif;
    fill: #6b6e68;
    stroke: #333838;
    stroke-width: 2px;
}
.glyph-a.italic {
    font-style: italic;
}
.glyph-a.bold {
    font-weight: 800;
}
.glyph-a.blue {
    fill: #5b93d8;
    stroke: #1f4f94;
}
.glyph-ab {
    font: 56px "Open Sans", sans-serif;
    fill: #3c3c3c;
}
.glyph-ab.small {
    font-size: 46px;
}
.glyph-num {
    font: bold 25px "Open Sans", sans-serif;
    fill: #2f5c9c;
}
.glyph-n {
    font: 36px "Liberation Serif", serif;
    fill: #fff;
}

/* Lineale */
.ruler {
    display: flex;
    flex: none;
    height: 45px;
    padding: 3px 0 1px 16px;
    color: #444;
    font-size: 28px;
    line-height: 38px;
}
.tab-kind {
    width: 14px;
    height: 12px;
    margin: 14px 571px 0 0;
}
.ruler-body {
    position: relative;
    flex: 1;
    min-width: 0;
    overflow: hidden;
    background: linear-gradient(#fffbf0, #fffbf0) 190px 0 no-repeat;
}
.ruler-numbers {
    width: 1741px;
    height: 41px;
    display: grid;
    grid-template-columns: repeat(32, 1fr);
    text-align: center;
}
.ruler-numbers span:nth-child(n+5) {
    background: linear-gradient(#d4cfc7, #d4cfc7) center top / 2px 3px no-repeat, linear-gradient(#d4cfc7, #d4cfc7) center bottom / 2px 3px no-repeat;
}
.ruler-marks {
    position: absolute;
    left: 0;
    top: 0;
    width: 1800px;
    height: 41px;
}
.workspace {
    display: flex;
    flex: 1;
    min-height: 0;
    overflow: hidden;
}
.vruler {
    width: 48px;
    flex: none;
    padding: 134px 4px 0;
    color: #444;
    font-size: 28px;
    line-height: 36px;
}
.vruler-numbers {
    height: 1577px;
    display: grid;
    grid-template-rows: repeat(29, 1fr);
    background: linear-gradient(#fffbf0, #fffbf0) 0 300px no-repeat;
}
.vruler-numbers span {
    writing-mode: vertical-rl;
    transform: rotate(180deg);
    text-align: center;
}
.vruler-numbers span:nth-child(n+7) {
    background: linear-gradient(#d4cfc7, #d4cfc7) left center / 3px 2px no-repeat, linear-gradient(#d4cfc7, #d4cfc7) right center / 3px 2px no-repeat;
}

/* Dokument */
.page {
    flex: 1;
    min-width: 0;
    height: 2000px;
    margin: 93px 528px 0 527px;
    padding: 276px 273px 0 218px;
    border: 1px solid #b8b3ab;
    border-bottom: none;
    background: #fef9e3;
    box-shadow: 0 0 6px rgba(0, 0, 0, 0.2);
}
.crop-mark {
    width: 65px;
    height: 65px;
    margin-left: -65px;
    border-right: 2px solid #c5c2b6;
    border-bottom: 2px solid #c5c2b6;
}
.page h1 {
    margin: 10px 0 119px;
    text-align: center;
    font-family: "Open Sans Condensed", "Open Sans", sans-serif;
    font-size: 160px;
    line-height: 180px;
    -webkit-text-stroke: 4px #000;
}
.page p {
    margin: 0;
}
.page p span {
    display: block;
    white-space: nowrap;
    text-align-last: justify;
}
.page p .last {
    text-align-last: left;
}
.lead {
    font-family: "Liberation Serif", serif;
    font-size: 70px;
    line-height: 94px;
}
.page .note {
    margin: 25px 0 0 70px;
    font-family: "Open Sans Condensed Light", "Open Sans Condensed", sans-serif;
    font-weight: 300;
    font-size: 61px;
    line-height: 84px;
    -webkit-text-stroke: 1px #000;
}
.note b {
    font-family: "Open Sans Condensed", sans-serif;
    font-weight: bold;
    font-size: 54px;
    line-height: 1;
    -webkit-text-stroke: 0;
}
.page .note + .note {
    margin-top: 11px;
}
.scrollbar {
    width: 53px;
    flex: none;
    display: flex;
    align-items: flex-end;
    justify-content: center;
    padding-bottom: 20px;
    background: #f0f0f0;
}

/* Statusleiste */
.statusbar {
    display: flex;
    flex: none;
    height: 57px;
    padding: 6px 0 1px;
    white-space: nowrap;
}
.statusbar > span {
    display: flex;
    align-items: center;
    border-right: 2px solid #f2f0ec;
}
.st-page {
    width: 492px;
    padding-left: 20px;
}
.st-words {
    width: 780px;
    padding-left: 15px;
}
.st-style {
    width: 446px;
    padding-left: 13px;
}
.st-lang {
    width: 653px;
    justify-content: center;
}
.st-empty {
    width: 158px;
}
.st-cell {
    width: 62px;
    justify-content: center;
}
.st-cell svg {
    width: 34px;
    height: 28px;
}
.st-gap {
    flex: 1;
}
.st-views {
    width: 179px;
    padding-left: 22px;
}
.st-views svg {
    width: 140px;
    height: 26px;
}
.st-zoom {
    width: 348px;
    padding-left: 6px;
}
.st-zoom svg {
    width: 20px;
    height: 20px;
}
.st-zoom input {
    appearance: none;
    flex: 1;
    min-width: 0;
    height: 24px;
    margin: 0;
    background: linear-gradient(#444, #444) 0 center / 100% 2px no-repeat, linear-gradient(#444, #444) 80px center / 2px 14px no-repeat, linear-gradient(#444, #444) 150px center / 2px 14px no-repeat;
}
.st-zoom input::-webkit-slider-thumb {
    appearance: none;
    width: 20px;
    height: 20px;
    border: 2px solid #999;
    border-radius: 50%;
    background: #fff;
}
.statusbar .st-percent {
    width: 112px;
    justify-content: center;
    border-right: none;
}

/* Taskleiste */
.taskbar {
    display: flex;
    flex: none;
    height: 95px;
    background: #7b6d55;
    color: #fff;
}
.start {
    width: 148px;
    height: 56px;
    margin: 19px 0 0 2px;
    display: flex;
    align-items: center;
    gap: 2px;
    padding-left: 2px;
    border: 2px solid #fff;
    border-right-color: #555;
    border-bottom-color: #555;
    background: #d4d0c8;
    color: #000;
    font-family: "DejaVu Sans Condensed", sans-serif;
    font-weight: bold;
    font-size: 34px;
}
.start svg {
    width: 48px;
    height: 52px;
}
.quick {
    display: flex;
    gap: 7px;
    margin: 7px 0 0 6px;
}
.quick button {
    width: 50px;
    height: 50px;
}
.quick svg {
    width: 50px;
    height: 50px;
}
.tasks {
    flex: 1;
    display: flex;
    gap: 28px;
    margin-left: 83px;
}
.task {
    width: 289px;
    display: flex;
    align-items: center;
    gap: 6px;
    padding: 8px 0 0 7px;
    border-bottom: 6px solid #bfa98a;
}
.task svg {
    width: 50px;
    height: 50px;
}
.task.narrow {
    gap: 13px;
    padding-left: 14px;
}
.task.narrow svg {
    width: 36px;
    height: 44px;
}
.task.current {
    width: 317px;
    margin: 0 -14px;
    padding-left: 20px;
    background: #333;
}
.task.media {
    background: linear-gradient(to right, #6f9c5a 17px, #877a63 17px);
    border-bottom-color: #4ee334;
}
.tray {
    display: flex;
    align-items: center;
    gap: 26px;
    padding: 6px 15px 0 0;
}
.tray-icon {
    width: 50px;
    height: 50px;
}
.tray .lang {
    margin-left: 8px;
}
.tray time {
    margin-left: 12px;
    padding-right: 20px;
    border-right: 2px solid #a79e8e;
    line-height: 95px;
    margin-top: -6px;
    padding-top: 6px;
}

/* Dialog */
.dialog {
    position: absolute;
    left: 2353px;
    right: 0;
    top: 49px;
    border: 3px solid #857c69;
    border-right: none;
    background: #d4cfc7;
    box-shadow: 0 4px 24px rgba(0, 0, 0, 0.4);
    overflow: hidden;
}
.dialog h2 {
    height: 88px;
    margin: 0;
    padding: 20px 19px 0;
    background: #7f745f;
    color: #fff;
    font-size: 36px;
    font-weight: normal;
}
.dialog-body {
    padding: 14px 0 14px 13px;
}
.search-grid {
    display: grid;
    grid-template-columns: 173px 1fr;
    margin-left: 6px;
    align-items: center;
}
.search-grid > label {
    font-weight: bold;
}
.field {
    height: 60px;
    padding: 0 2px;
    border: 1px solid #adadad;
    border-right: none;
    border-radius: 0;
    background: #fffbf0;
    color: #d8141c;
}
.second {
    grid-column: 2;
}
.info {
    height: 58px;
    padding-top: 8px;
}
.info.result {
    padding-top: 4px;
}
.checks {
    display: flex;
    gap: 14px;
    padding-top: 1px;
    height: 60px;
}
.check {
    display: flex;
    align-items: center;
    gap: 4px;
    height: 57px;
    white-space: nowrap;
}
.check input {
    appearance: none;
    flex: none;
    width: 34px;
    height: 34px;
    margin: 0;
    border: 2px solid #333;
    background: #fff;
}
.check.off {
    color: #838383;
}
.check.off input {
    border-color: #ccc;
}
.actions {
    display: flex;
    gap: 14px;
    margin: 20px 0 0 6px;
}
.actions button, .formats button, .help, .similar {
    height: 68px;
    padding-top: 2px;
    border: 1px solid #adadad;
    background: #e1e1e1;
}
.actions button {
    width: 337px;
    flex: none;
}
.actions .default {
    border: 3px solid #1c74b4;
    padding: 0 20px;
}
.default span {
    display: block;
    border: 1px dotted #000;
}
.expander {
    display: flex;
    align-items: center;
    gap: 4px;
    margin-top: 11px;
}
.minus {
    width: 33px;
    height: 33px;
    border: 1px solid #999;
    background: linear-gradient(#4a64a0, #4a64a0) center / 18px 3px no-repeat, linear-gradient(#fff, #e4e4e4);
}
.options {
    display: grid;
    grid-template-columns: 584px 294px 1fr;
    margin: 13px 0 0 12px;
    align-items: center;
}
.check.right {
    grid-column: 3;
}
.check {
    grid-column: 1;
}
.check.tall {
    height: 76px;
}
.similar {
    grid-column: 2;
    width: 281px;
    border-color: #bfbfbf;
    background: #ccc;
    color: #838383;
}
.formats {
    display: flex;
    gap: 267px;
    margin: 3px 0 0 278px;
}
.formats button {
    width: 225px;
    flex: none;
}
.help {
    width: 184px;
    margin-top: 14px;
}
```
